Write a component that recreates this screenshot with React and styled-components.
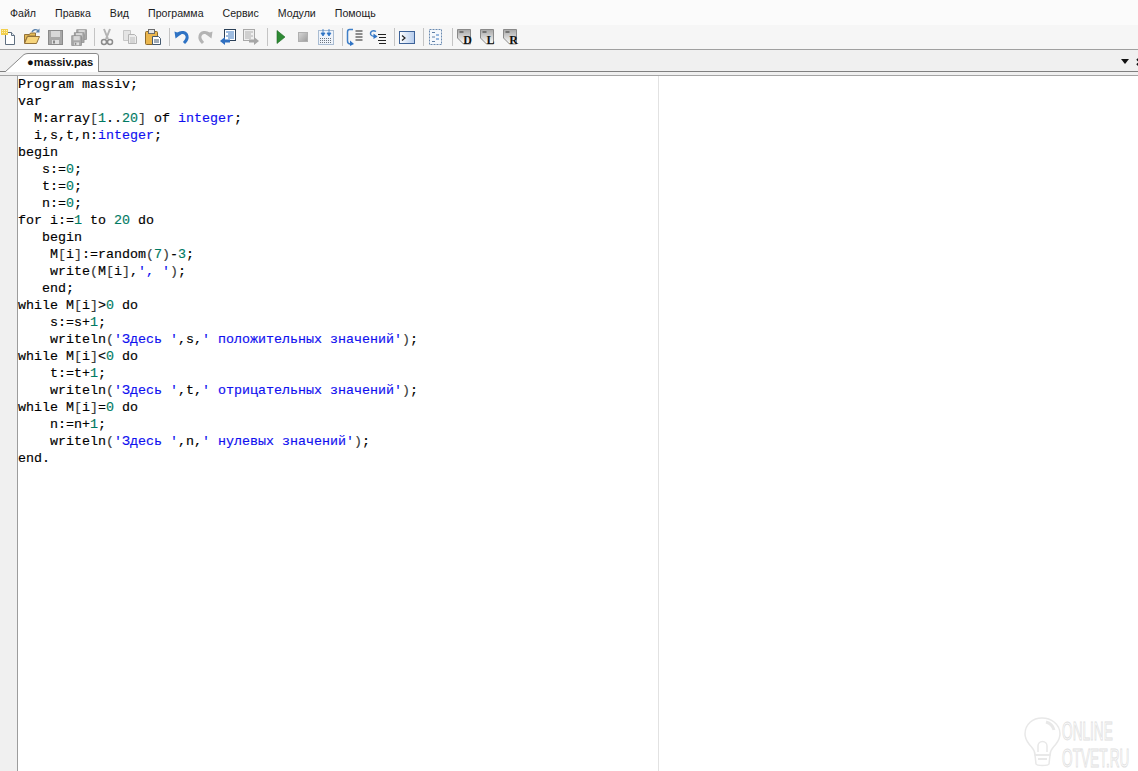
import React from "react";
import styled, { createGlobalStyle } from "styled-components";

const Global = createGlobalStyle`
  html, body { margin: 0; padding: 0; height: 100%; background: #fff; overflow: hidden; }
  #root { height: 100%; }
`;

const Page = styled.div`
  position: relative;
  display: flex;
  flex-direction: column;
  width: 1138px;
  height: 771px;
  overflow: hidden;
  font-family: "Liberation Sans", Arial, sans-serif;
`;

const MenuBar = styled.nav`
  display: flex;
  align-items: center;
  gap: 19px;
  height: 25px;
  padding: 0 0 0 10px;
  background: #fbfbfb;
  box-sizing: border-box;
`;

const MenuItem = styled.span`
  font-size: 10.6px;
  color: #1c1c1c;
`;

const Toolbar = styled.div`
  display: flex;
  align-items: center;
  height: 24px;
  background: #f6f6f6;
  border-bottom: 1px solid #a0a0a0;
`;

const ToolSlot = styled.span`
  display: flex;
  width: 23px;
  height: 24px;
  align-items: center;
  flex: none;
  svg { display: block; width: 18px; height: 18px; }
`;

const ToolSep = styled.span`
  width: 1px;
  height: 18px;
  margin: 0 3px 0 2px;
  background: #c4c4c4;
  flex: none;
`;

const TabStrip = styled.div`
  display: flex;
  align-items: flex-end;
  justify-content: space-between;
  height: 21px;
  background: #f0f0f0;
  border-bottom: 1px solid #808080;
  box-sizing: content-box;
`;

const Tab = styled.div`
  position: relative;
  width: 95px;
  height: 20px;
  margin: 0 0 -1px 5px;
`;

const TabShape = styled.svg`
  position: absolute;
  inset: 0;
  width: 95px;
  height: 20px;
`;

const TabLabel = styled.span`
  position: absolute;
  left: 22px;
  top: 3px;
  font-size: 11.2px;
  line-height: 14px;
  font-weight: 700;
  color: #111;
  white-space: nowrap;
`;

const TabControls = styled.div`
  display: flex;
  align-items: center;
  gap: 7px;
  height: 21px;
  margin-right: -6px;
  padding-top: 2px;
  box-sizing: border-box;
  svg { display: block; width: 8px; height: 8px; }
`;

const DropArrow = styled.span`
  width: 0;
  height: 0;
  border-left: 4px solid transparent;
  border-right: 4px solid transparent;
  border-top: 5px solid #111;
`;

const TabGap = styled.div`
  height: 3px;
  background: #f0f0f0;
  border-bottom: 1px solid #a4a4a4;
`;

const EditorArea = styled.div`
  display: flex;
  flex: 1;
  min-height: 0;
  background: #fff;
`;

const Gutter = styled.div`
  width: 17px;
  flex: none;
  background: #f0f0f0;
  border-right: 1px solid #9c9c9c;
`;

const CodePane = styled.pre`
  width: 640px;
  flex: none;
  margin: 0;
  border-right: 1px solid #e2e2e2;
  font-family: "Liberation Mono", "Courier New", monospace;
  font-size: 13.33px;
  line-height: 17px;
  color: #000;
  -webkit-text-stroke: 0.15px currentColor;
`;

const CodeLine = styled.div`
  height: 17px;
  white-space: pre;
`;

const tokenColors = { num: "#007a62", str: "#1010f0", type: "#1010f0", punct: "#3a3a3a" };

const Token = styled.span`
  color: ${(p) => tokenColors[p.$kind] || "#000"};
`;

const Watermark = styled.svg`
  position: absolute;
  right: 0;
  bottom: 0;
  width: 128px;
  height: 66px;
`;

const code = [
  "Program massiv;",
  "var",
  "  M:array[1..20] of integer;",
  "  i,s,t,n:integer;",
  "begin",
  "   s:=0;",
  "   t:=0;",
  "   n:=0;",
  "for i:=1 to 20 do",
  "   begin",
  "    M[i]:=random(7)-3;",
  "    write(M[i],', ');",
  "   end;",
  "while M[i]>0 do",
  "    s:=s+1;",
  "    writeln('Здесь ',s,' положительных значений');",
  "while M[i]<0 do",
  "    t:=t+1;",
  "    writeln('Здесь ',t,' отрицательных значений');",
  "while M[i]=0 do",
  "    n:=n+1;",
  "    writeln('Здесь ',n,' нулевых значений');",
  "end.",
];

const tokenize = (line) =>
  line.split(/('[^']*'|\d+|integer|[()\[\]])/).filter(Boolean).map((t, i) => {
    let kind = "plain";
    if (t[0] === "'") kind = "str";
    else if (/^\d/.test(t)) kind = "num";
    else if (t === "integer") kind = "type";
    else if (/^[()\[\]]$/.test(t)) kind = "punct";
    return <Token key={i} $kind={kind}>{t}</Token>;
  });

const Svg = ({ children }) => <svg viewBox="0 0 18 18">{children}</svg>;

const NewIcon = () => (
  <Svg>
    <path d="M5.500 4.500h6l3 3v9h-9z" fill="#fff" stroke="#5f6f80" />
    <path d="M11.500 4.500v3h3" fill="#dfe6ee" stroke="#5f6f80" />
    <path d="M1 1h7v6H1z" fill="#f2cf4e" />
    <path d="M2 2h1v1H2zM4 2h1v1H4zM6 2h1v1H6zM2 4h1v1H2zM4 4h1v1H4zM6 4h1v1H6z" fill="#fff3b8" />
  </Svg>
);
const OpenIcon = () => (
  <Svg>
    <path d="M1.500 6.500h5l1-1.500h5v3h-8l-3 7z" fill="#e6bb55" stroke="#93723a" />
    <path d="M4.500 8.500h12l-3 7h-12z" fill="#f7d57c" stroke="#93723a" />
    <path d="M9 4c1-2.500 4-3 6-1.500" fill="none" stroke="#5d83ad" strokeWidth="1.400" />
    <path d="M16.500 .5v4h-4z" fill="#5d83ad" />
  </Svg>
);
const Floppy = ({ x = 0, y = 0, s = 1 }) => (
  <g transform={`translate(${x} ${y}) scale(${s})`}>
    <rect x="2.500" y="2.500" width="14" height="14" fill="#a8a8a8" stroke="#8a8a8a" />
    <rect x="5" y="3" width="9" height="6" fill="#d8d8d8" />
    <rect x="6" y="12" width="7" height="4" fill="#e0e0e0" />
    <rect x="7" y="12.500" width="2" height="3" fill="#8a8a8a" />
  </g>
);
const SaveIcon = () => <Svg><Floppy /></Svg>;
const SaveAllIcon = () => (
  <Svg>
    <Floppy x="6" y="0" s=".7" />
    <Floppy x="3.500" y="3" s=".7" />
    <Floppy x="1" y="6" s=".7" />
  </Svg>
);
const CutIcon = () => (
  <Svg>
    <path d="M6 1l4 10M12 1L8 11" stroke="#b4b4b4" strokeWidth="2" fill="none" />
    <circle cx="6" cy="14" r="2.500" fill="none" stroke="#8c8c8c" strokeWidth="1.500" />
    <circle cx="12" cy="14" r="2.500" fill="none" stroke="#8c8c8c" strokeWidth="1.500" />
  </Svg>
);
const CopyIcon = () => (
  <Svg>
    <path d="M2.500 2.500h7v10h-7z" fill="#e4e4e4" stroke="#c6c6c6" />
    <path d="M7.500 6.500h6l2 2v7h-8z" fill="#ececec" stroke="#b4b4b4" />
    <path d="M9 10h5M9 12h5M9 14h5" stroke="#bdbdbd" />
  </Svg>
);
const PasteIcon = () => (
  <Svg>
    <rect x="1.500" y="3.500" width="12" height="13" rx="1" fill="#eab64e" stroke="#8d6a2b" />
    <rect x="4.500" y="1.500" width="6" height="4" fill="#e4e4e4" stroke="#6c6c6c" />
    <path d="M8.500 8.500h6l2 2v6h-8z" fill="#fff" stroke="#44586e" />
    <path d="M10 12h5M10 14h5" stroke="#44586e" />
  </Svg>
);
const UndoIcon = ({ c = "#2f73c4", flip }) => (
  <Svg>
    <g transform={flip ? "translate(18 0) scale(-1 1)" : undefined}>
      <path d="M5 6c3-2.500 8-2 9 2 .8 3-1 5-3 7" fill="none" stroke={c} strokeWidth="3" />
      <path d="M1.500 3.500l1 7 6-4.500z" fill={c} />
    </g>
  </Svg>
);
const PageLines = ({ c, line }) => (
  <>
    <rect x="5.500" y="1.500" width="11" height="11" fill="#fff" stroke={c} />
    <path d="M7 4h8M9 6h6M7 8h8M9 10h6" stroke={line} />
  </>
);
const FindIcon = () => (
  <Svg>
    <PageLines c="#2a3f57" line="#3c78c0" />
    <path d="M1 13l5-4v2.500h5v3H6V17z" fill="#2f6fc0" />
  </Svg>
);
const FindNextIcon = () => (
  <Svg>
    <rect x="1.500" y="1.500" width="11" height="11" fill="#efefef" stroke="#a8a8a8" />
    <path d="M3 4h8M3 6h6M3 8h8M3 10h6" stroke="#b0b0b0" />
    <path d="M17 13l-5-4v2.500H7v3h5V17z" fill="#a6a6a6" />
  </Svg>
);
const RunIcon = () => (
  <Svg><path d="M6 2.500l8 6.500-8 6.500z" fill="#2e8a34" stroke="#1d6a24" strokeWidth=".6" /></Svg>
);
const StopIcon = () => (
  <Svg>
    <defs>
      <linearGradient id="stopG" x1="0" y1="0" x2="1" y2="1">
        <stop offset="0" stopColor="#d8d8d8" />
        <stop offset="1" stopColor="#9c9c9c" />
      </linearGradient>
    </defs>
    <rect x="4.500" y="4.500" width="9" height="9" fill="url(#stopG)" stroke="#b0b0b0" />
  </Svg>
);
const CompileIcon = () => (
  <Svg>
    <rect x="1.500" y="2.500" width="15" height="14" fill="#eef3fa" stroke="#a9bcd2" />
    <path d="M3 10.500h12M3 12.500h12M3 14.500h12" stroke="#6a7480" strokeDasharray="1 1" />
    <path d="M6 1v4M4 5h4l-2 3zM12 1v4M10 5h4l-2 3z" fill="#2f73c4" stroke="#2f73c4" strokeWidth=".8" />
  </Svg>
);
const StepLines = ({ x }) => (
  <path d={`M${x} 3h7M${x} 6h7M${x} 9h7M${x} 12h7`} stroke="#222" />
);
const StepIntoIcon = () => (
  <Svg>
    <path d="M7 1.500H3.500C2 1.500 1.500 2.500 1.500 4v9c0 2 1 3 3 3" fill="none" stroke="#3f7fc8" strokeWidth="1.500" />
    <path d="M4 12.500l4 3.500-4 2z" fill="#2f73c4" />
    <StepLines x="9.500" />
  </Svg>
);
const StepOverIcon = () => (
  <Svg>
    <path d="M7 3.500C4 1.500 1 3.500 1.500 6c.3 2 3 2.500 6 2.500" fill="none" stroke="#3f7fc8" strokeWidth="1.500" />
    <path d="M4.500 5.500L8.500 8.500 4.500 11z" fill="#2f73c4" />
    <path d="M9 6.500h8M10 9.500h7M9 12.500h8M10 15.500h7" stroke="#222" />
  </Svg>
);
const ConsoleIcon = () => (
  <Svg>
    <defs>
      <linearGradient id="consG" x1="0" y1="0" x2="1" y2="0">
        <stop offset="0" stopColor="#fff" />
        <stop offset="1" stopColor="#b4cbec" />
      </linearGradient>
    </defs>
    <rect x="1.500" y="3.500" width="15" height="12" fill="url(#consG)" stroke="#3d6298" />
    <path d="M4 7.500l3 2.500-3 2.500" fill="none" stroke="#222" strokeWidth="1.200" />
  </Svg>
);
const OutlineIcon = () => (
  <Svg>
    <rect x="2.500" y="1.500" width="12" height="15" fill="#f5f8fc" stroke="#6a8ab0" strokeDasharray="2 1" />
    <path d="M5 4.500h3M5 9h3M5 13.500h3" stroke="#5f7fa6" />
    <path d="M9 7h3M9 11h3" stroke="#3a78c4" />
  </Svg>
);
const PlotIcon = ({ letter }) => (
  <Svg>
    <defs>
      <linearGradient id="plotG" x1="0" y1="0" x2="0" y2="1">
        <stop offset="0" stopColor="#a6a6a6" />
        <stop offset="1" stopColor="#ffffff" />
      </linearGradient>
    </defs>
    <path d="M1.500 1.500h13v14.500h-7l-6-6z" fill="url(#plotG)" stroke="#8a8a8a" />
    <path d="M3.500 4h4" stroke="#333" />
    <text x="11.500" y="16" textAnchor="middle" fontFamily="'Liberation Serif', serif" fontWeight="700" fontSize="12" fill="#111">{letter}</text>
  </Svg>
);

const tools = [
  <NewIcon />, <OpenIcon />, <SaveIcon />, <SaveAllIcon />, null,
  <CutIcon />, <CopyIcon />, <PasteIcon />, null,
  <UndoIcon />, <UndoIcon c="#b4b4b4" flip />, <FindIcon />, <FindNextIcon />, null,
  <RunIcon />, <StopIcon />, <CompileIcon />, null,
  <StepIntoIcon />, <StepOverIcon />, null,
  <ConsoleIcon />, null,
  <OutlineIcon />, null,
  <PlotIcon letter="D" />, <PlotIcon letter="L" />, <PlotIcon letter="R" />,
];

const menus = ["Файл", "Правка", "Вид", "Программа", "Сервис", "Модули", "Помощь"];

export default function App() {
  return (
    <Page>
      <Global />
      <MenuBar>
        {menus.map((m) => <MenuItem key={m}>{m}</MenuItem>)}
      </MenuBar>
      <Toolbar>
        {tools.map((t, i) => t ? <ToolSlot key={i}>{t}</ToolSlot> : <ToolSep key={i} />)}
      </Toolbar>
      <TabStrip>
        <Tab>
          <TabShape viewBox="0 0 95 20">
            <path d="M0 20L19 2.500Q21 1.500 23 1.500H91Q93.500 1.500 93.500 4V20" fill="#fff" stroke="#8a8a8a" />
          </TabShape>
          <TabLabel>●massiv.pas</TabLabel>
        </Tab>
        <TabControls>
          <DropArrow />
          <svg viewBox="0 0 8 8"><path d="M1 1l6 6M7 1L1 7" stroke="#111" strokeWidth="2" /></svg>
        </TabControls>
      </TabStrip>
      <TabGap />
      <EditorArea>
        <Gutter />
        <CodePane>
          {code.map((l, i) => <CodeLine key={i}>{tokenize(l)}</CodeLine>)}
        </CodePane>
      </EditorArea>
      <Watermark viewBox="0 0 128 66">
        <g fill="none" stroke="#e8e8e8" strokeWidth="1.500">
          <path d="M25 50c0-6-3-7-6-11-3-4-4-7-4-10 0-10 8-16 17-16s18 6 18 16c0 3-1 6-4 10-3 4-6 5-6 11z" />
          <path d="M25 50h15l-1 9c-1 2-12 2-13 0z" />
          <path d="M28 47v-6a4.500 4.500 0 0 1 9 0v6" />
          <path d="M36 17c4 1 7 4 8 8" strokeWidth="3" />
          <path d="M28 54h9" strokeWidth="2" />
        </g>
        <g fill="#fff" stroke="#e0e0e0" strokeWidth="1" fontFamily="'Liberation Sans', sans-serif" fontSize="25" transform="scale(.545 1)">
          <text x="95.500" y="35">ONLINE</text>
          <text x="95.500" y="62">OTVET.RU</text>
        </g>
      </Watermark>
    </Page>
  );
}
